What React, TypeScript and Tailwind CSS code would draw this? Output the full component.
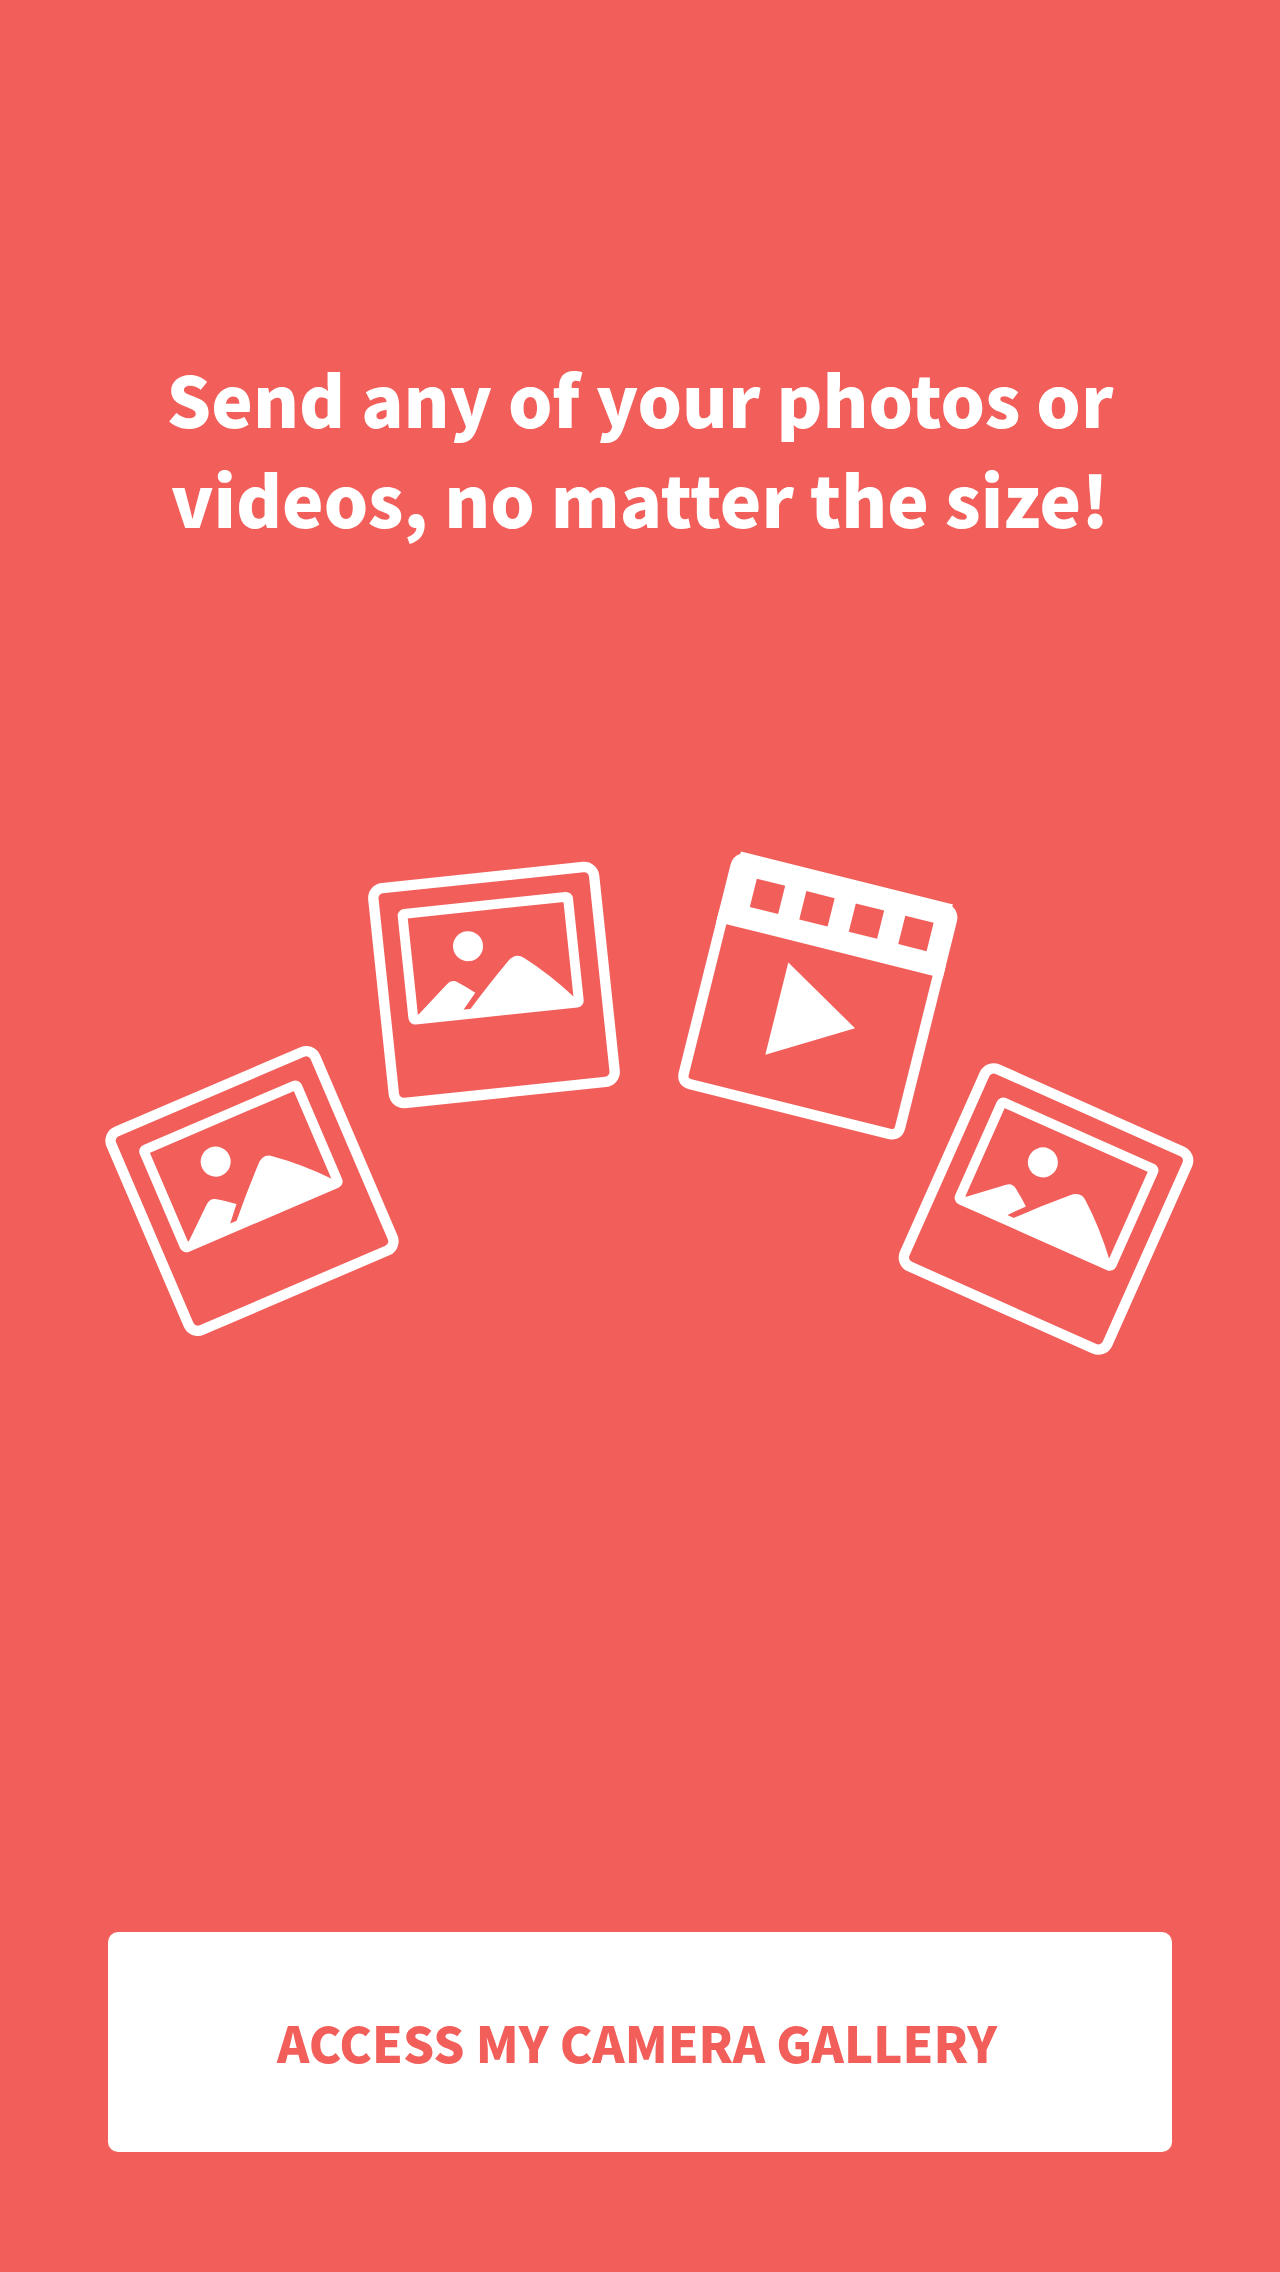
function Photo({ transform }: { transform: string }) {
  return (
    <g transform={transform}>
      <rect x="-111" y="-108" width="222" height="216" rx="10" fill="none" stroke="white" strokeWidth="10.4" />
      <rect x="-83.7" y="-80.2" width="166.4" height="106.4" rx="2" fill="none" stroke="white" strokeWidth="9.8" />
      <circle cx="-21.8" cy="-41.3" r="15" fill="white" />
      <path
        d="M-79.1 22.4 L-47 -5.4 Q-41.5 -10.5 -35.5 -6.2 Q-27 -0.5 -19.4 5.8 L-33.1 21.6 L-26.8 22.3 Q-5 -1.5 16 -21.8 Q24.5 -30.5 32.5 -24 Q56 -5.5 78.6 20.5 V28 H-79.1 Z"
        fill="white"
      />
    </g>
  );
}

function Film({ transform }: { transform: string }) {
  return (
    <g transform={transform}>
      <path
        d="M-111.5 -60 V107.5 Q-111.5 116.5 -102.5 116.5 H102.5 Q111.5 116.5 111.5 107.5 V-60"
        fill="none"
        stroke="white"
        strokeWidth="10.4"
      />
      <path
        fillRule="evenodd"
        d="M-109.5 -121.5 H109 L108.5 -119.5 Q116.7 -115 116.7 -106 V-47.5 H-116.7 V-106 Q-116.7 -115 -110 -119 Z M-87.7 -99 v29.2 h29.2 v-29.2 Z M-36.7 -99 v29.2 h29.2 v-29.2 Z M14.3 -99 v29.2 h29.2 v-29.2 Z M65.3 -99 v29.2 h29.2 v-29.2 Z"
        fill="white"
      />
      <path d="M-36.9 -25.3 L43.7 22.3 L-36.9 69.7 Z" fill="white" />
    </g>
  );
}

export default function App() {
  return (
    <main className="flex min-h-screen flex-col bg-[#f25e5a] px-[108px] pt-[348px] pb-[120px] font-['Noto_Sans_CJK_JP',sans-serif] font-black">
      <h1 className="text-center text-[70px] leading-[100px] text-white">
        Send any of your photos or <br />
        videos, no matter the size!
      </h1>
      <svg
        className="-mx-[108px] mt-[292px]"
        viewBox="0 0 1280 540"
        role="img"
        aria-label="Photos and a video"
      >
        <Photo transform="translate(252 351) rotate(-23.2)" />
        <Photo transform="translate(494 145) rotate(-6)" />
        <Film transform="translate(818 156) rotate(14)" />
        <Photo transform="translate(1046 369) rotate(24)" />
      </svg>
      <button
        type="button"
        className="mt-auto flex h-[220px] w-full items-center justify-center rounded-[10px] bg-white pr-1.5 text-[49px] text-[#f25e5a]"
      >
        ACCESS MY CAMERA GALLERY
      </button>
    </main>
  );
}
